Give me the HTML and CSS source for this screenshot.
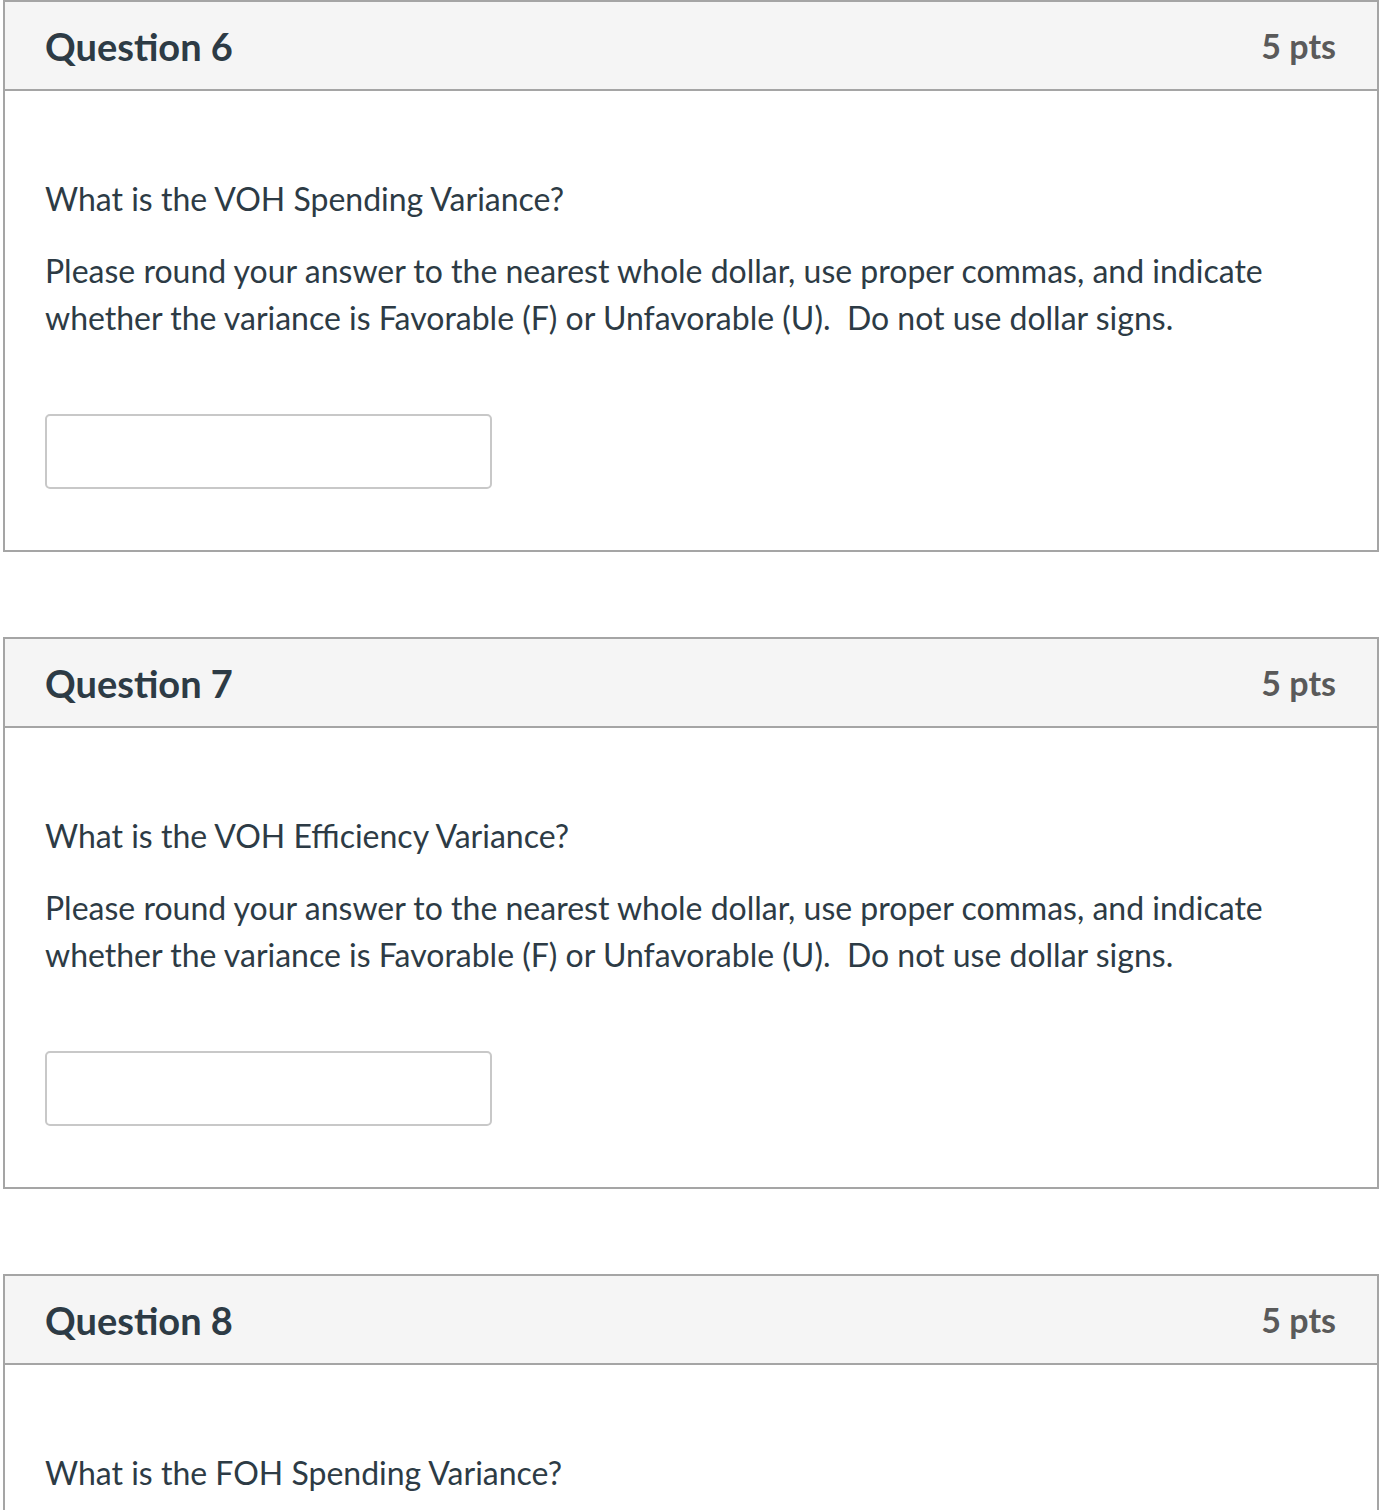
FILE: index.html
```html
<!DOCTYPE html>
<html>
<head>
<meta charset="utf-8">
<link rel="stylesheet" href="styles.css">
</head>
<body>
<div class="page">
  <div class="question">
    <div class="q-header">
      <span class="q-title">Question 6</span>
      <span class="q-points">5 pts</span>
    </div>
    <div class="q-body">
      <p>What is the VOH Spending Variance?</p>
      <p>Please round your answer to the nearest whole dollar, use proper commas, and indicate whether the variance is Favorable (F) or Unfavorable (U).&nbsp; Do not use dollar signs.</p>
      <input class="answer" type="text">
    </div>
  </div>
  <div class="question">
    <div class="q-header">
      <span class="q-title">Question 7</span>
      <span class="q-points">5 pts</span>
    </div>
    <div class="q-body">
      <p>What is the VOH Efficiency Variance?</p>
      <p>Please round your answer to the nearest whole dollar, use proper commas, and indicate whether the variance is Favorable (F) or Unfavorable (U).&nbsp; Do not use dollar signs.</p>
      <input class="answer" type="text">
    </div>
  </div>
  <div class="question">
    <div class="q-header">
      <span class="q-title">Question 8</span>
      <span class="q-points">5 pts</span>
    </div>
    <div class="q-body">
      <p>What is the FOH Spending Variance?</p>
      <p>Please round your answer to the nearest whole dollar, use proper commas, and indicate whether the variance is Favorable (F) or Unfavorable (U).&nbsp; Do not use dollar signs.</p>
      <input class="answer" type="text">
    </div>
  </div>
</div>
</body>
</html>
```

FILE: styles.css
```css
html, body {
  margin: 0;
  padding: 0;
  background: #ffffff;
}
body {
  font-family: Lato, "Noto Sans", sans-serif;
  color: #2d3b45;
}
.page {
  padding-left: 3px;
}
.question {
  border: 2px solid #a5a5a5;
  margin-bottom: 85px;
  background: #ffffff;
}
.q-header {
  height: 87px;
  background: #f5f5f5;
  border-bottom: 2px solid #a5a5a5;
  display: flex;
  align-items: center;
  justify-content: space-between;
  padding: 0 41px 0 40px;
}
.q-title {
  font-size: 38px;
  font-weight: 700;
  color: #2d3b45;
}
.q-points {
  font-size: 34px;
  font-weight: 700;
  color: #5a5a5a;
}
.q-body {
  padding: 84px 40px 61px 40px;
}
.q-body p {
  margin: 0 0 25px 0;
  font-size: 32px;
  line-height: 47px;
}
.answer {
  display: block;
  margin-top: 73px;
  width: 447px;
  height: 75px;
  box-sizing: border-box;
  border: 2px solid #c8c8c8;
  border-radius: 5px;
  background: #fff;
  padding: 0 12px;
  font-family: Lato, sans-serif;
  font-size: 30px;
  outline: none;
}
```
